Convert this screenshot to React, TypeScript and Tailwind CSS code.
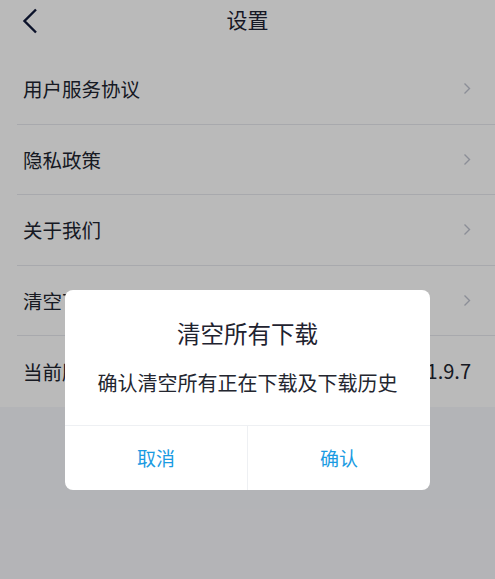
import React from "react";

const ROWS: { label: string; value?: string }[] = [
  { label: "用户服务协议" },
  { label: "隐私政策" },
  { label: "关于我们" },
  { label: "清空下载" },
  { label: "当前版本", value: "1.9.7" },
];

function ChevronRight() {
  return (
    <svg width="8" height="13" viewBox="0 0 8 13" fill="none" aria-hidden="true">
      <path d="M1.5 1.5L6.5 6.5L1.5 11.5" stroke="#bfc3cf" strokeWidth="1.4" />
    </svg>
  );
}

function BackIcon() {
  return (
    <svg width="16" height="26" viewBox="0 0 16 26" fill="none" aria-hidden="true">
      <path d="M14 1.5L2.5 13L14 24.5" stroke="#10193a" strokeWidth="2.4" />
    </svg>
  );
}

export default function App() {
  return (
    <div
      className="relative h-[579px] w-[495px] overflow-hidden bg-[#f6f7fb]"
      style={{ fontFamily: '"Noto Sans CJK SC", "Noto Sans", sans-serif' }}
    >
      <div className="bg-white">
        <header className="relative h-[54px]">
          <div className="flex h-[40px] items-center justify-center">
            <span className="text-[21px] text-[#1d2233]">设置</span>
          </div>
          <span className="absolute left-[22px] top-[8px]">
            <BackIcon />
          </span>
        </header>
        <ul>
          {ROWS.map((r, i) => (
            <li
              key={r.label}
              className={`ml-[17px] flex h-[70.5px] items-center justify-between pl-[6px] pr-[24px] ${
                i < ROWS.length - 1 ? "border-b border-[#e6e8ee]" : ""
              }`}
            >
              <span className="text-[19.5px] text-[#20242f]">{r.label}</span>
              {r.value ? (
                <span className="text-[20px] text-[#20242f]">{r.value}</span>
              ) : (
                <ChevronRight />
              )}
            </li>
          ))}
        </ul>
      </div>

      <div className="absolute inset-0 bg-black/[0.27]">
        <div className="absolute left-[65px] top-[290px] w-[365px] overflow-hidden rounded-[8px] bg-white">
          <div className="px-4 pb-[28px] pt-[27px] text-center">
            <div className="text-[23.5px] leading-[32px] text-[#1f2330]">清空所有下载</div>
            <div className="mt-[20px] text-[20px] leading-[28px] text-[#23262f]">
              确认清空所有正在下载及下载历史
            </div>
          </div>
          <div className="flex h-[65px] border-t border-[#eef0f3]">
            <button className="flex-1 text-[19px] text-[#1a9be2]">取消</button>
            <div className="w-px bg-[#eef0f3]" />
            <button className="flex-1 text-[19px] text-[#1a9be2]">确认</button>
          </div>
        </div>
      </div>
    </div>
  );
}
